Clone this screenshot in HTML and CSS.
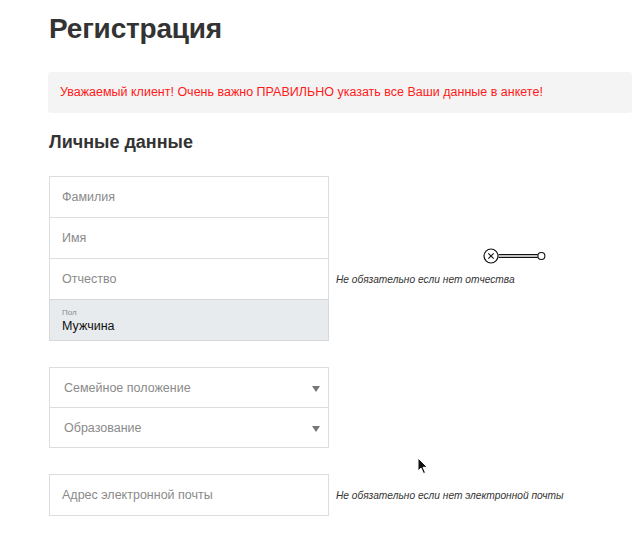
FILE: index.html
```html
<!DOCTYPE html>
<html lang="ru">
<head>
<meta charset="utf-8">
<title>Регистрация</title>
<link rel="stylesheet" href="styles.css">
</head>
<body>
<div class="page">
  <h1 class="title">Регистрация</h1>
  <div class="alert">Уважаемый клиент! Очень важно ПРАВИЛЬНО указать все Ваши данные в анкете!</div>
  <h2 class="section">Личные данные</h2>

  <div class="group">
    <div class="row">
      <div class="field"><span class="ph">Фамилия</span></div>
    </div>
    <div class="row">
      <div class="field"><span class="ph">Имя</span></div>
    </div>
    <div class="row">
      <div class="field"><span class="ph">Отчество</span></div>
      <div class="hint">Не обязательно если нет отчества</div>
    </div>
    <div class="row">
      <div class="field field-filled">
        <span class="lbl">Пол</span>
        <span class="val">Мужчина</span>
      </div>
    </div>
  </div>

  <div class="group">
    <div class="row">
      <div class="field field-select"><span class="ph">Семейное положение</span><span class="arrow"></span></div>
    </div>
    <div class="row">
      <div class="field field-select"><span class="ph">Образование</span><span class="arrow"></span></div>
    </div>
  </div>

  <div class="group">
    <div class="row">
      <div class="field"><span class="ph">Адрес электронной почты</span></div>
      <div class="hint">Не обязательно если нет электронной почты</div>
    </div>
  </div>

  <svg class="handle" width="68" height="18" viewBox="0 0 68 18">
    <circle cx="9" cy="9" r="7" fill="#fff" stroke="#111" stroke-width="1.2"/>
    <path d="M6.3 6.3 L11.7 11.7 M11.7 6.3 L6.3 11.7" stroke="#111" stroke-width="1.1"/>
    <path d="M16.5 7.6 H55.8 M16.5 10.4 H55.8" stroke="#111" stroke-width="1.2"/>
    <circle cx="59.4" cy="9" r="3.5" fill="#fff" stroke="#111" stroke-width="1.1"/>
  </svg>

  <svg class="cursor" width="12" height="18" viewBox="0 0 12 18">
    <path d="M1 1 L1 14 L4 11 L6.5 16.5 L8.5 15.6 L6 10.3 L10.3 10.3 Z" fill="#111" stroke="#fff" stroke-width="1"/>
  </svg>
</div>
</body>
</html>
```

FILE: styles.css
```css
html, body {
  margin: 0;
  padding: 0;
  background: #fff;
}

body {
  font-family: "Liberation Sans", Arial, sans-serif;
  color: #333;
}

.page {
  position: relative;
  width: 643px;
  height: 533px;
  overflow: hidden;
  padding: 0 11px 0 49px;
  box-sizing: border-box;
}

.title {
  margin: 0;
  padding-top: 12px;
  font-size: 28px;
  line-height: 34px;
  font-weight: bold;
  color: #333;
  letter-spacing: -0.2px;
}

.alert {
  margin-top: 26px;
  margin-left: -1px;
  height: 41px;
  box-sizing: border-box;
  padding: 13px 12px 0;
  background: #f4f4f4;
  border-radius: 3px;
  color: #ff1a1a;
  font-size: 12.5px;
  line-height: 15px;
}

.section {
  margin: 18px 0 0;
  font-size: 18px;
  line-height: 22px;
  font-weight: bold;
  color: #333;
}

.group {
  margin-top: 23px;
  display: flex;
  flex-direction: column;
}

.group + .group {
  margin-top: 26px;
}

.row {
  display: flex;
  align-items: center;
}

.row + .row {
  margin-top: -1px;
}

.field {
  position: relative;
  width: 280px;
  height: 42px;
  box-sizing: border-box;
  border: 1px solid #ddd;
  background: #fff;
  display: flex;
  align-items: center;
  padding: 0 12px;
  flex-shrink: 0;
}

.ph {
  font-size: 12.5px;
  color: #8a8a8a;
}

.field-filled {
  background: #e8ebee;
  border-color: #d8d8d8;
  flex-direction: column;
  align-items: flex-start;
  justify-content: center;
  padding-top: 1px;
}

.lbl {
  font-size: 8px;
  line-height: 10px;
  color: #888;
}

.val {
  font-size: 12.5px;
  line-height: 16px;
  color: #111;
}

.field-select {
  justify-content: space-between;
  padding: 0 8px 0 14px;
  height: 41px;
}

.arrow {
  width: 0;
  height: 0;
  border-left: 4px solid transparent;
  border-right: 4px solid transparent;
  border-top: 6px solid #777;
  margin-top: 3px;
}

.hint {
  margin-left: 7px;
  font-size: 10.2px;
  font-style: italic;
  color: #333;
  white-space: nowrap;
}

.handle {
  position: absolute;
  left: 482px;
  top: 247px;
}

.cursor {
  position: absolute;
  left: 417px;
  top: 457px;
}
```
